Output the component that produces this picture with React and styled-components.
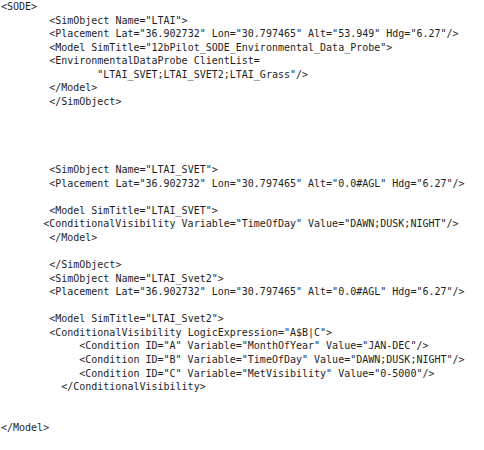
import React from "react";
import styled, { createGlobalStyle } from "styled-components";

const Global = createGlobalStyle`
  html, body { margin: 0; padding: 0; background: #ffffff; }
  body { width: 484px; height: 450px; overflow: hidden; }
`;

const Editor = styled.div`
  display: flex;
  flex-direction: column;
  padding: 0 0 0 1px;
  font-family: "DejaVu Sans Mono", "Liberation Mono", monospace;
  font-size: 10px;
  line-height: 13.58px;
  color: #1e1e1e;
  background: #ffffff;
`;

const Line = styled.div`
  white-space: pre;
  height: 13.58px;
  padding-left: ${(p) => (p.$indent || 0) * 6.02}px;
`;

const lines = [
  [0, "<SODE>"],
  [8, '<SimObject Name="LTAI">'],
  [8, '<Placement Lat="36.902732" Lon="30.797465" Alt="53.949" Hdg="6.27"/>'],
  [8, '<Model SimTitle="12bPilot_SODE_Environmental_Data_Probe">'],
  [8, "<EnvironmentalDataProbe ClientList="],
  [16, '"LTAI_SVET;LTAI_SVET2;LTAI_Grass"/>'],
  [8, "</Model>"],
  [8, "</SimObject>"],
  [0, ""],
  [0, ""],
  [0, ""],
  [0, ""],
  [8, '<SimObject Name="LTAI_SVET">'],
  [8, '<Placement Lat="36.902732" Lon="30.797465" Alt="0.0#AGL" Hdg="6.27"/>'],
  [0, ""],
  [8, '<Model SimTitle="LTAI_SVET">'],
  [7, '<ConditionalVisibility Variable="TimeOfDay" Value="DAWN;DUSK;NIGHT"/>'],
  [8, "</Model>"],
  [0, ""],
  [8, "</SimObject>"],
  [8, '<SimObject Name="LTAI_Svet2">'],
  [8, '<Placement Lat="36.902732" Lon="30.797465" Alt="0.0#AGL" Hdg="6.27"/>'],
  [0, ""],
  [8, '<Model SimTitle="LTAI_Svet2">'],
  [8, '<ConditionalVisibility LogicExpression="A$B|C">'],
  [13, '<Condition ID="A" Variable="MonthOfYear" Value="JAN-DEC"/>'],
  [13, '<Condition ID="B" Variable="TimeOfDay" Value="DAWN;DUSK;NIGHT"/>'],
  [13, '<Condition ID="C" Variable="MetVisibility" Value="0-5000"/>'],
  [10, "</ConditionalVisibility>"],
  [0, ""],
  [0, ""],
  [0, "</Model>"],
];

export default function App() {
  return (
    <>
      <Global />
      <Editor>
        {lines.map(([indent, text], i) => (
          <Line key={i} $indent={indent}>
            {text}
          </Line>
        ))}
      </Editor>
    </>
  );
}
